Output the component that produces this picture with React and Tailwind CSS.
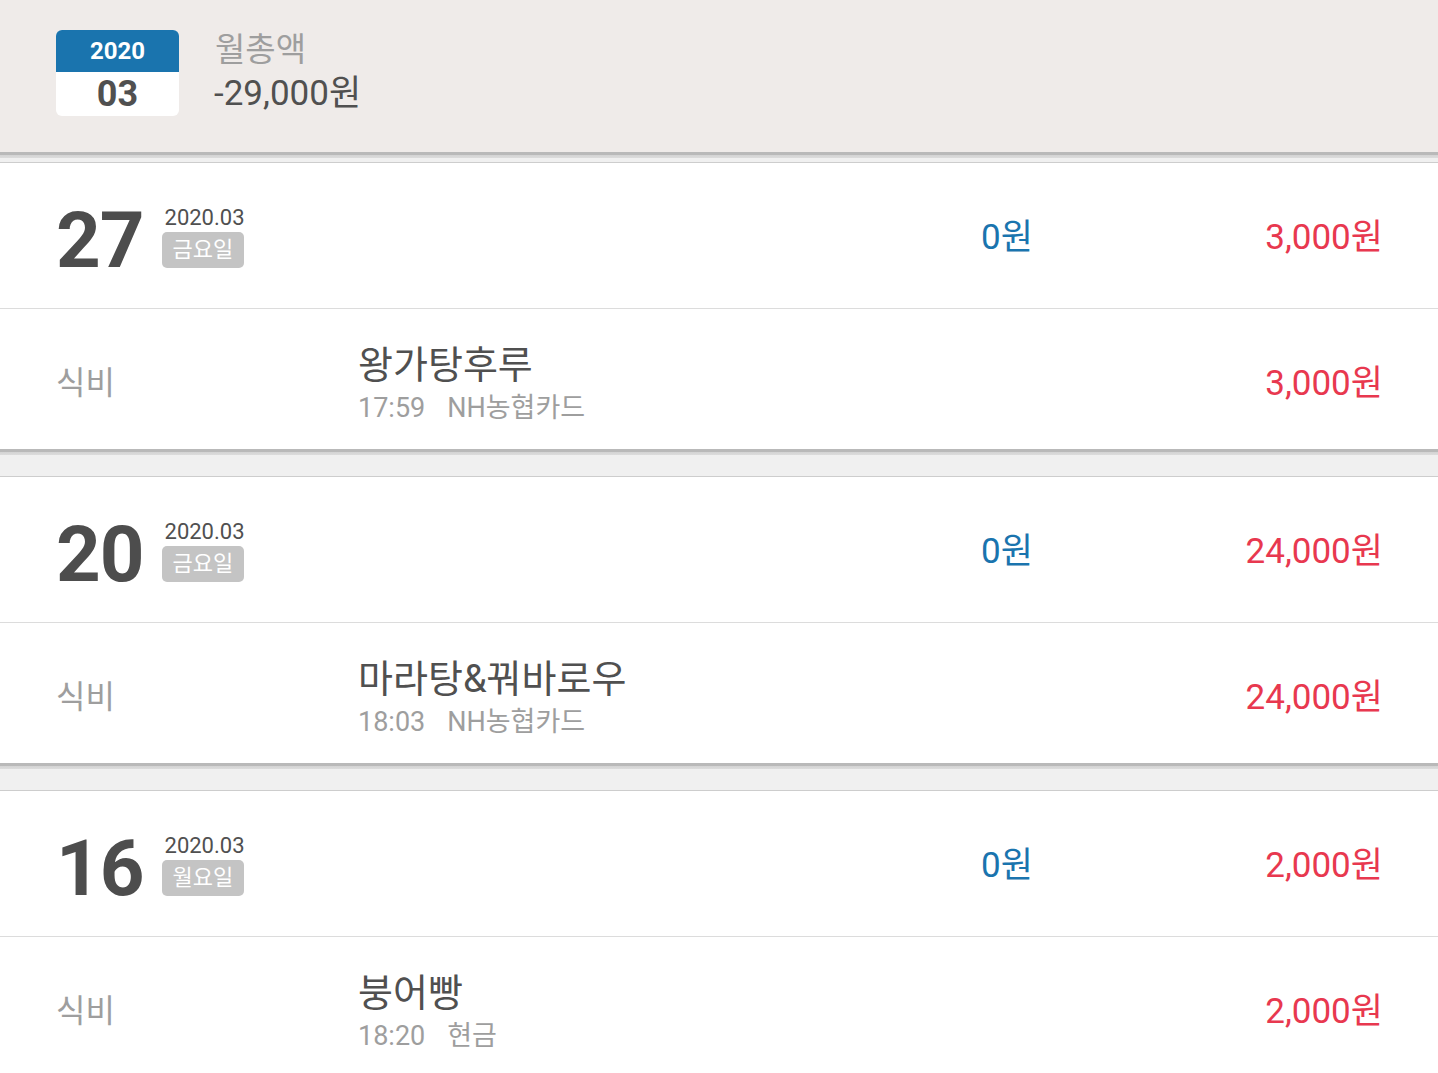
import React from 'react';

const days = [
  { day: '27', ym: '2020.03', weekday: '금요일', income: '0원', expense: '3,000원',
    items: [{ category: '식비', name: '왕가탕후루', time: '17:59', method: 'NH농협카드', amount: '3,000원' }] },
  { day: '20', ym: '2020.03', weekday: '금요일', income: '0원', expense: '24,000원',
    items: [{ category: '식비', name: '마라탕&꿔바로우', time: '18:03', method: 'NH농협카드', amount: '24,000원' }] },
  { day: '16', ym: '2020.03', weekday: '월요일', income: '0원', expense: '2,000원',
    items: [{ category: '식비', name: '붕어빵', time: '18:20', method: '현금', amount: '2,000원' }] },
];

function Gap({ h }) {
  return (
    <div className={`${h} border-b border-[#cdcdcd] bg-[linear-gradient(#b9b9b9_0px,#b9b9b9_3px,#d3d3d3_3px,#dcdcdc_6px,#f0f0f0_6px)]`} />
  );
}

export default function App() {
  return (
    <div className="w-[1438px] bg-[#f0f0f0] font-['Roboto','Noto_Sans_CJK_KR',sans-serif]">
      {/* Month summary */}
      <div className="h-[152px] bg-[#efebe9] flex items-start pt-[30px] pl-[56px]">
        <div className="w-[123px] rounded-[6px] overflow-hidden bg-white">
          <div className="h-[42px] bg-[#1a74ae] text-white text-[24px] font-bold leading-[42px] text-center">2020</div>
          <div className="h-[44px] text-[#505050] text-[36px] font-bold leading-[44px] text-center">03</div>
        </div>
        <div className="ml-[35px]">
          <div className="text-[33px] leading-[40px] text-[#9e9e9e] ml-[1px]">월총액</div>
          <div className="text-[35px] leading-[44px] text-[#505050] mt-[2px]">-29,000원</div>
        </div>
      </div>
      <Gap h="h-[11px]" />

      {days.map((d, i) => (
        <div key={d.day}>
          <div className="bg-white">
            <div className="h-[146px] flex items-center pl-[56px] pr-[55px] border-b border-[#dcdcdc]">
              <div className="flex-1 flex items-center">
                <div className="text-[78px] font-bold leading-none text-[#4d4d4d] tracking-[-1px] mt-[10px]">{d.day}</div>
                <div className="ml-[18px] flex flex-col items-start">
                  <div className="text-[22px] leading-[28px] text-[#505050] ml-[3px]">{d.ym}</div>
                  <div className="h-[36px] px-[11px] rounded-[5px] bg-[#c4c4c4] text-white text-[22px] leading-[36px]">{d.weekday}</div>
                </div>
              </div>
              <div className="w-[402px] flex justify-between items-center text-[35px] mt-[5px]">
                <span className="text-[#1a74ae]">{d.income}</span>
                <span className="text-[#e8384f]">{d.expense}</span>
              </div>
            </div>
            {d.items.map(it => (
              <div key={it.name} className="h-[140px] flex items-center pl-[56px] pr-[55px] pt-[8px]">
                <div className="w-[302px] text-[32px] text-[#9e9e9e]">{it.category}</div>
                <div className="flex-1">
                  <div className="text-[38px] leading-[46px] text-[#505050]">{it.name}</div>
                  <div className="text-[27px] leading-[34px] text-[#9e9e9e] flex mt-[3px]">
                    <span>{it.time}</span>
                    <span className="ml-[22px]">{it.method}</span>
                  </div>
                </div>
                <div className="text-[35px] text-[#e8384f] mt-[2px]">{it.amount}</div>
              </div>
            ))}
          </div>
          {i < days.length - 1 && <Gap h="h-[28px]" />}
        </div>
      ))}
    </div>
  );
}
